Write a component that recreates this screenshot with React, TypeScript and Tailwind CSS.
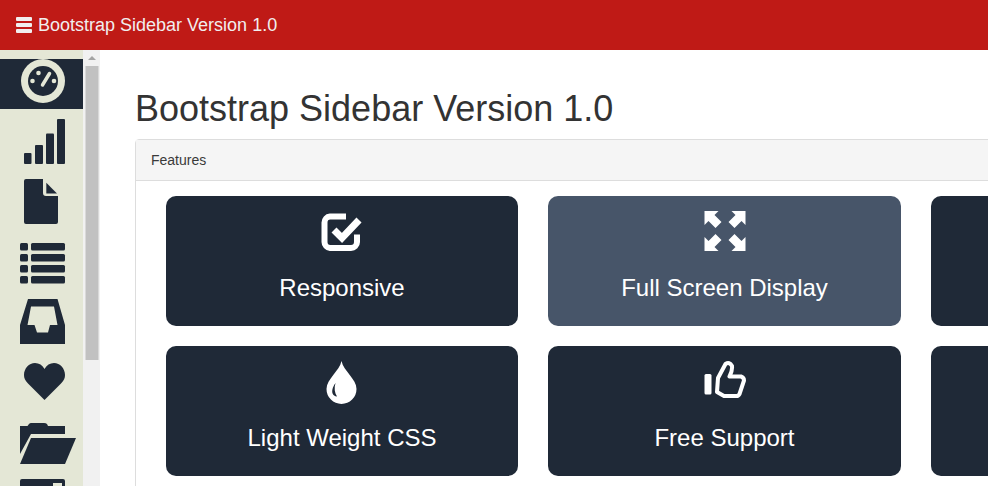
const features = [
  { label: "Responsive", icon: "check", active: false },
  { label: "Full Screen Display", icon: "expand", active: true },
  { label: "", icon: "", active: false },
  { label: "Light Weight CSS", icon: "drop", active: false },
  { label: "Free Support", icon: "thumb", active: false },
  { label: "", icon: "", active: false },
];

// every side icon sits in a 83x60 box, one row per menu entry
const sideIcons = [
  <>
    <rect x="24" y="34" width="7.5" height="11" rx="1" />
    <rect x="35" y="26" width="8" height="19" rx="1" />
    <rect x="46" y="14.5" width="8" height="30.5" rx="1" />
    <rect x="57" y="0" width="8" height="45" rx="1" />
  </>,
  <>
    <path d="M26 0H43V14Q43 17 46 17H58V43Q58 45 56 45H26Q24 45 24 43V2Q24 0 26 0Z" />
    <path d="M46.3 3.7L57 14.5H46.3Z" />
  </>,
  <>
    <rect x="20" y="4" width="8" height="7.5" rx="1.5" />
    <rect x="31" y="4" width="34" height="7.5" rx="1.5" />
    <rect x="20" y="15" width="8" height="7.5" rx="1.5" />
    <rect x="31" y="15" width="34" height="7.5" rx="1.5" />
    <rect x="20" y="26" width="8" height="7.5" rx="1.5" />
    <rect x="31" y="26" width="34" height="7.5" rx="1.5" />
    <rect x="20" y="37" width="8" height="7.5" rx="1.5" />
    <rect x="31" y="37" width="34" height="7.5" rx="1.5" />
  </>,
  <path
    fillRule="evenodd"
    d="M28 0H57.5L65 26V45H20V26ZM31 7.5L27.5 26H34.5L37 33.5H48L50 26H57.5L54 7.5Z"
  />,
  <path d="M44.5 41L28 24.5C25 21.5 24 19 24 16 24 9.5 29 4 35 4 39 4 42.5 6 44.5 10 46.5 6 50 4 54 4 60 4 65 9.5 65 16 65 19 64 21.5 61 24.5Z" />,
  <>
    <path d="M20 7H27.5L29 5Q30 4 31 4H44Q46 4 47 5L48 7H65V15H31L20 35Z" />
    <path d="M31 19H76L65 45H20Z" />
  </>,
  <path
    fillRule="evenodd"
    d="M22 0H63Q65 0 65 2V45H20V2Q20 0 22 0ZM53 4V12H62V4Z"
  />,
];

function FeatureIcon({ name }: { name: string }) {
  if (name === "check") {
    return (
      <svg width="50" height="50" viewBox="0 0 50 50" className="block">
        <path
          d="M29 5.5H13A6 6 0 0 0 7.500 11.500V31A6 6 0 0 0 13 37H34A6 6 0 0 0 40 31V23.500"
          fill="none"
          stroke="#fff"
          strokeWidth="6"
        />
        <path d="M17 19L25 27 42 9" fill="none" stroke="#fff" strokeWidth="7" />
      </svg>
    );
  }
  if (name === "expand") {
    const arrow = "0,0 14,0 10,4 17,11 11,17 4,10 0,14";
    return (
      <svg width="50" height="50" viewBox="0 0 50 50" className="block" fill="#fff">
        <polygon points={arrow} transform="translate(4.5 0)" />
        <polygon points={arrow} transform="translate(45.5 0) scale(-1 1)" />
        <polygon points={arrow} transform="translate(4.5 40) scale(1 -1)" />
        <polygon points={arrow} transform="translate(45.5 40) scale(-1 -1)" />
      </svg>
    );
  }
  if (name === "drop") {
    return (
      <svg width="50" height="50" viewBox="0 0 50 50" className="block">
        <path
          fill="#fff"
          fillRule="evenodd"
          d="M24.5 0C26.5 10 39.5 18 39.5 28A15 15 0 0 1 9.5 28C9.5 18 22.5 10 24.5 0ZM18.5 22C15.5 26 14 31 16.5 34Q18.5 35.5 20 35.5C17.5 32 17 27 18.5 22Z"
        />
      </svg>
    );
  }
  if (name === "thumb") {
    return (
      <svg width="50" height="50" viewBox="0 0 50 50" className="block">
        <rect x="4.5" y="13" width="7" height="20.5" rx="1.5" fill="#fff" />
        <path
          d="M18 17L25.500 3Q29.500 0.500 32 5 32.500 10 29.500 15.500H41Q44 16.500 44 19.500L39.500 33Q38.500 35 36.500 35H24L17 31Z"
          fill="none"
          stroke="#fff"
          strokeWidth="4"
          strokeLinejoin="round"
        />
      </svg>
    );
  }
  return null;
}

function App() {
  return (
    <div className="h-screen overflow-hidden flex flex-col bg-white font-['Liberation_Sans',Arial,sans-serif] text-[#333]">
      <div className="h-[50px] flex-none bg-[#bf1a16] flex items-center pl-[16px] gap-[6px] text-[18px] text-[#f1eeee]">
        <div className="flex flex-col gap-[1.5px] w-[16px]">
          <div className="h-[4.500px] rounded-[1px] bg-[#f1eeee]"></div>
          <div className="h-[4.500px] rounded-[1px] bg-[#f1eeee]"></div>
          <div className="h-[4.500px] rounded-[1px] bg-[#f1eeee]"></div>
        </div>
        <span>Bootstrap Sidebar Version 1.0</span>
      </div>
      <div className="flex flex-1 min-h-0">
        <div className="w-[83px] flex-none bg-[#e4e7d6] pt-[9px] overflow-hidden">
          <div className="h-[50px] bg-[#1f2937] flex items-start justify-center">
            <svg width="44" height="44" viewBox="0 0 44 44" className="block translate-x-[1px]">
              <circle cx="22" cy="22" r="22" fill="#e4e7d6" />
              <circle cx="22" cy="22" r="15" fill="#1f2937" />
              <circle cx="11.500" cy="22" r="2.300" fill="#e4e7d6" />
              <circle cx="17.500" cy="14" r="2.300" fill="#e4e7d6" />
              <circle cx="33" cy="22" r="2.300" fill="#e4e7d6" />
              <path d="M21.500 26L28.500 14.500" stroke="#e4e7d6" strokeWidth="3.500" strokeLinecap="round" />
            </svg>
          </div>
          <div className="pt-[10px]">
            {sideIcons.map((icon, i) => (
              <svg key={i} width="83" height="60" viewBox="0 0 83 60" fill="#1f2937" className="block">
                {icon}
              </svg>
            ))}
          </div>
        </div>
        <div className="w-[17px] flex-none bg-[#f1f1f1] flex flex-col items-center pt-[6px]">
          <div className="w-0 h-0 border-x-[4px] border-x-transparent border-b-[4px] border-b-[#a3a3a3]"></div>
          <div className="w-[13px] h-[294px] mt-[6px] bg-[#c1c1c1] translate-x-[0.5px]"></div>
        </div>
        <div className="flex-none pl-[35px] pt-[39px]">
          <h1 className="text-[36px] leading-[40px] mb-[10px]">Bootstrap Sidebar Version 1.0</h1>
          <div className="w-[1210px] border border-[#ddd] rounded-t-[4px]">
            <div className="h-[41px] bg-[#f5f5f5] border-b border-[#ddd] px-[15px] flex items-center text-[14px] text-[#3a3a3a]">
              Features
            </div>
            <div className="pt-[15px] pl-[30px] pb-[20px] grid grid-cols-[352px_353px_352px] gap-x-[30px] gap-y-[20px]">
              {features.map((f, i) => (
                <div
                  key={i}
                  className={
                    f.active
                      ? "h-[130px] rounded-[10px] bg-[#475569] text-white flex flex-col items-center pt-[15px]"
                      : "h-[130px] rounded-[10px] bg-[#1f2937] text-white flex flex-col items-center pt-[15px]"
                  }
                >
                  <div className="h-[50px]">
                    <FeatureIcon name={f.icon} />
                  </div>
                  <div className="mt-[10px] text-[24px] leading-[34px]">{f.label}</div>
                </div>
              ))}
            </div>
          </div>
        </div>
      </div>
    </div>
  );
}

export default App;
